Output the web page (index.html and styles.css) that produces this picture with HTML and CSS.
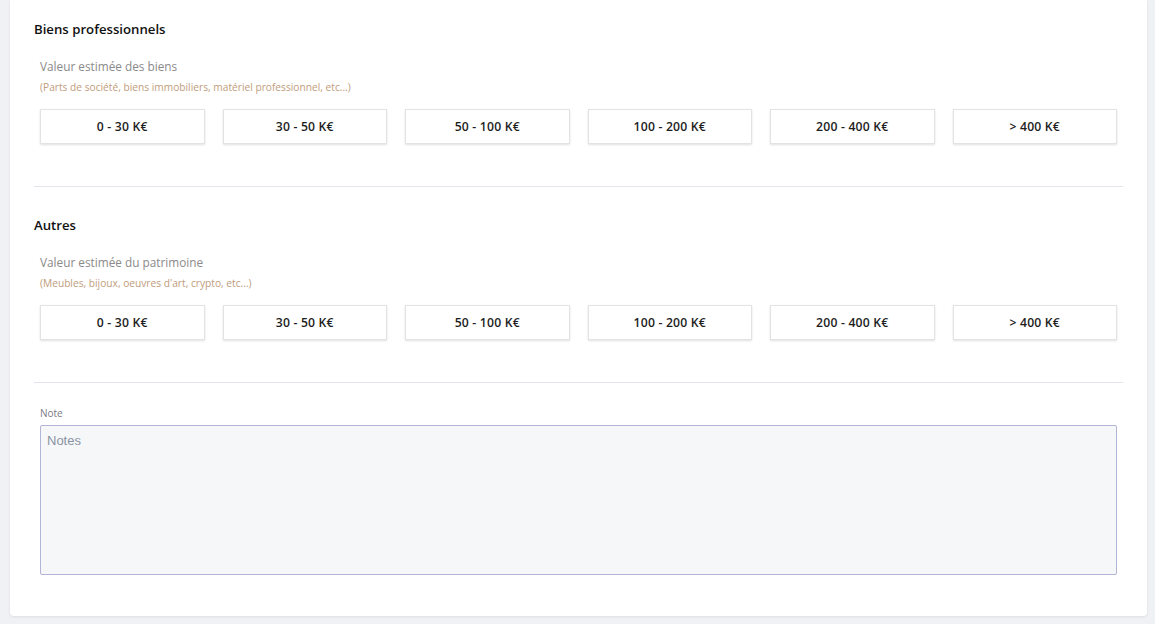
FILE: index.html
```html
<!DOCTYPE html>
<html lang="fr">
<head>
    <meta charset="UTF-8">
    <meta name="viewport" content="width=device-width, initial-scale=1.0">
    <title>Patrimoine</title>
    <link rel="stylesheet" href="styles.css">
</head>
<body>

<div class="card">
    <div class="section">
        <h3>Biens professionnels</h3>
        <div class="field">
            <div class="label">Valeur estimée des biens</div>
            <div class="hint">(Parts de société, biens immobiliers, matériel professionnel, etc...)</div>
            <div class="choices">
                <button class="choice">0 - 30 K€</button>
                <button class="choice">30 - 50 K€</button>
                <button class="choice">50 - 100 K€</button>
                <button class="choice">100 - 200 K€</button>
                <button class="choice">200 - 400 K€</button>
                <button class="choice">&gt; 400 K€</button>
            </div>
        </div>
    </div>

    <div class="section">
        <h3>Autres</h3>
        <div class="field">
            <div class="label">Valeur estimée du patrimoine</div>
            <div class="hint">(Meubles, bijoux, oeuvres d'art, crypto, etc...)</div>
            <div class="choices">
                <button class="choice">0 - 30 K€</button>
                <button class="choice">30 - 50 K€</button>
                <button class="choice">50 - 100 K€</button>
                <button class="choice">100 - 200 K€</button>
                <button class="choice">200 - 400 K€</button>
                <button class="choice">&gt; 400 K€</button>
            </div>
        </div>
    </div>

    <div class="note-group">
        <label for="note" class="note-label">Note</label>
        <textarea id="note" placeholder="Notes"></textarea>
    </div>
</div>

</body>
</html>
```

FILE: styles.css
```css
body {
    font-family: 'Open Sans', sans-serif;
    background: #f0f1f5;
    margin: 0;
    padding: 0 8px 8px 10px;
    color: #222;
}

.card {
    background: #ffffff;
    padding: 20px 24px 41px 24px;
    border-radius: 0 0 4px 4px;
    box-shadow: 0px 1px 3px rgba(0, 0, 0, 0.08);
}

.section {
    border-bottom: 1px solid #e4e5ec;
    padding-bottom: 42px;
    margin-bottom: 29px;
}
.section + .section {
    margin-bottom: 23px;
}

h3 {
    font-size: 13.2px;
    line-height: 18px;
    font-weight: 600;
    color: #111;
    margin: 0;
}

.field {
    padding: 0 6px;
}
.label {
    margin-top: 19px;
    font-size: 11.8px;
    line-height: 18px;
    color: #8a8a8a;
}
.hint {
    margin-top: 5px;
    font-size: 10.2px;
    line-height: 14px;
    color: #c09c7c;
}
.choices {
    display: grid;
    grid-template-columns: repeat(6, 1fr);
    gap: 18px;
    margin-top: 15px;
}
.choice {
    height: 35px;
    background: #fff;
    border: 1px solid #e3e3e6;
    box-shadow: 0px 1px 2px rgba(0, 0, 0, 0.12);
    font-family: 'Open Sans', sans-serif;
    font-size: 12.2px;
    font-weight: 600;
    letter-spacing: 0.2px;
    color: #1d1d1d;
    cursor: pointer;
}

.note-group {
    padding: 0 6px;
}
.note-label {
    display: block;
    font-size: 10px;
    line-height: 14px;
    color: #7b7b85;
    margin-bottom: 5px;
}
textarea {
    display: block;
    width: 100%;
    height: 150px;
    box-sizing: border-box;
    background: #f6f7f9;
    border: 1px solid #b3b5d6;
    border-radius: 2px;
    padding: 7px 6px;
    font-family: 'Liberation Sans', Arial, sans-serif;
    font-size: 13px;
    resize: none;
}
textarea::placeholder {
    color: #8a93a3;
}
```
